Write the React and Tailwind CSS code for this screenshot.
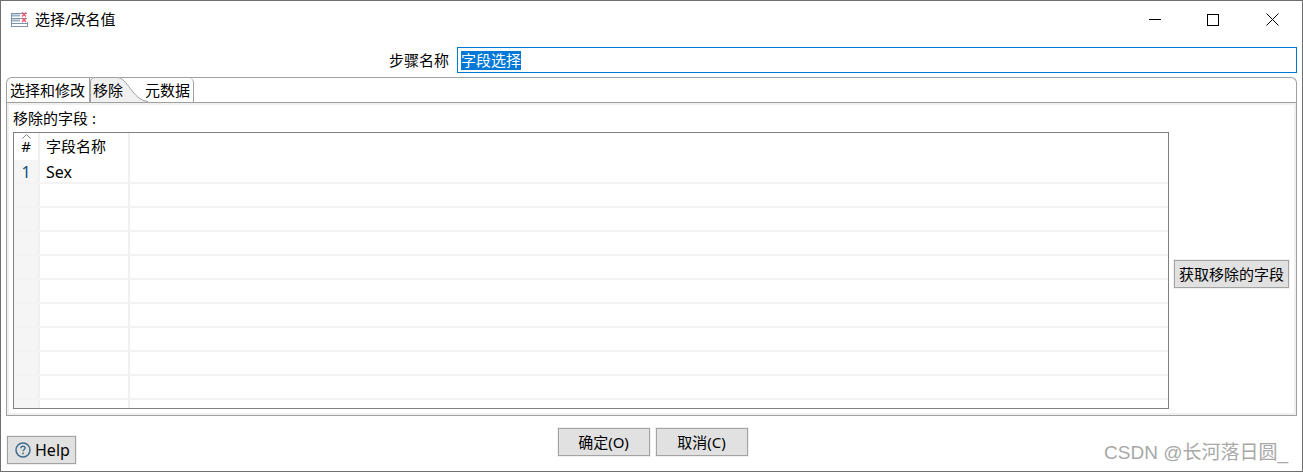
const rows = ["Sex", "", "", "", "", "", "", "", "", "", ""];

const btn = "border border-[#a3a3a3] bg-[#e1e1e1] ring-1 ring-[#f0f0f0]";

function AppIcon() {
  return (
    <svg width="18" height="16" viewBox="0 0 18 16" fill="none">
      <path d="M1 1.5h15M1 6.5h15M1 11.5h15M1 14.5h15M.5 1v14M16.5 10v5" stroke="#7a95ab" />
      <path d="M1 3.5h8M1 8.5h8" stroke="#9db1c2" strokeWidth="2" />
      <path d="M11 .5l4 4M15 .5l-4 4M11 6l4 4M15 6l-4 4" stroke="#ee5470" strokeWidth="1.4" />
    </svg>
  );
}

function HelpIcon() {
  return (
    <svg width="16" height="16" viewBox="0 0 16 16" fill="none">
      <circle cx="8" cy="8" r="7" stroke="#3f6c8e" strokeWidth="1.5" />
      <path d="M5.9 6.2c0-1.2 1-1.9 2.1-1.9s2.1.7 2.1 1.8c0 1.6-2.1 1.6-2.1 3.2" stroke="#3f6c8e" strokeWidth="1.4" />
      <rect x="7.2" y="10.6" width="1.6" height="1.6" fill="#3f6c8e" />
    </svg>
  );
}

function WindowButtons() {
  return (
    <div className="ml-auto flex items-center">
      <svg className="mr-[45px]" width="13" height="13" viewBox="0 0 13 13" fill="none">
        <path d="M0 6.5h12" stroke="black" />
      </svg>
      <svg className="mr-[47px]" width="12" height="12" viewBox="0 0 12 12" fill="none">
        <rect x="0.5" y="0.5" width="11" height="11" stroke="black" />
      </svg>
      <svg className="mr-[23px]" width="13" height="13" viewBox="0 0 13 13" fill="none">
        <path d="M.5.5l12 12M12.5.5l-12 12" stroke="black" />
      </svg>
    </div>
  );
}

function Tabs() {
  return (
    <div className="relative mx-[5px] flex h-[25px] items-stretch rounded-t-[6px] border-x border-t border-[#a0a0a0] bg-white text-[15px] leading-[24px]">
      <div className="w-[83px] border-r border-[#a0a0a0] pl-[3px] whitespace-nowrap">选择和修改</div>
      <div className="relative w-[55px] rounded-tl-[6px] pl-[3px] whitespace-nowrap">
        <svg className="absolute left-0 top-[-1px]" width="58" height="25" viewBox="0 0 58 25" fill="none">
          <path d="M0 25V5Q0 0 6 0H27C38 0 42 23 58 24V25Z" fill="#f0f0f0" />
          <path d="M.5 25V5Q.5 .5 6 .5H27C38 .5 42 23 58 24.5" stroke="#a0a0a0" />
        </svg>
        <span className="relative">移除</span>
      </div>
      <div className="relative w-[49px] rounded-tr-[5px] border-r border-[#a0a0a0] whitespace-nowrap">元数据</div>
    </div>
  );
}

function FieldTable() {
  return (
    <div className="h-[277px] flex-1 overflow-hidden border border-[#808080] bg-white">
      <div className="flex h-[27px] text-[15px] leading-[27px]">
        <div className="relative w-[26px] border-r-2 border-[#f0f0f0] text-center">
          #
          <svg className="absolute left-[8px] top-[1px]" width="9" height="5" viewBox="0 0 9 5" fill="none">
            <path d="M.5 4.5l4-4 4 4" stroke="#808080" />
          </svg>
        </div>
        <div className="w-[90px] border-r-2 border-[#f0f0f0] pl-[6px]">字段名称</div>
      </div>
      {rows.map((name, i) => (
        <div key={i} className="flex h-[24px] border-b-2 border-[#f3f3f6] text-[16px] leading-[24px]">
          <div className="w-[26px] border-r-2 border-[#f0f0f0] bg-[#f5f5f5] text-center text-[#0f4f80]">{name ? i + 1 : ""}</div>
          <div className="w-[90px] border-r-2 border-[#f0f0f0] pl-[6px]">{name}</div>
        </div>
      ))}
    </div>
  );
}

export default function App() {
  return (
    <div className="relative flex h-[472px] w-[1303px] flex-col border border-[#6f6f6f] bg-white font-['Noto_Sans','Noto_Sans_CJK_SC',sans-serif] text-black">
      <div className="flex h-[37px] items-center pl-[10px]">
        <AppIcon />
        <span className="ml-[6px] text-[15px]">选择/改名值</span>
        <WindowButtons />
      </div>

      <div className="mt-[9px] flex h-[26px] items-center">
        <label className="ml-[388px] w-[68px] text-[15px] whitespace-nowrap">步骤名称</label>
        <div className="flex h-[26px] w-[840px] items-center border border-[#0078d7] pl-[3px]">
          <span className="bg-[#0078d7] text-[15px] leading-[19px] text-white">字段选择</span>
        </div>
      </div>

      <div className="mt-[4px]">
        <Tabs />
      </div>

      <div className="mx-[5px] flex h-[314px] flex-col border border-[#a0a0a0] bg-white outline-2 outline-offset-[-3px] outline-[#f0f0f0]">
        <div className="h-[29px] pl-[6px] pt-[5px] text-[15px] leading-[20px]">移除的字段 :</div>
        <div className="flex pl-[6px]">
          <FieldTable />
          <div className="flex w-[127px] items-center pl-[5px] pt-[6px]">
            <button className={`h-[28px] w-[115px] text-[15px] leading-[24px] whitespace-nowrap ${btn}`}>获取移除的字段</button>
          </div>
        </div>
      </div>

      <div className="relative flex-1">
        <button className={`absolute left-[6px] top-[20px] flex h-[28px] w-[69px] items-center gap-[4px] pl-[7px] text-[16px] ${btn}`}>
          <HelpIcon />
          Help
        </button>
        <div className="flex justify-center gap-[6px] pl-[2px] pt-[12px]">
          <button className={`h-[28px] w-[92px] text-[15px] ${btn}`}>确定(O)</button>
          <button className={`h-[28px] w-[92px] text-[15px] ${btn}`}>取消(C)</button>
        </div>
        <span className="absolute right-[14px] top-[23px] font-['Liberation_Sans','Noto_Sans_CJK_SC',sans-serif] text-[19px] leading-[28px] whitespace-nowrap text-[#a8a8a8]">CSDN @长河落日圆_</span>
      </div>
    </div>
  );
}
